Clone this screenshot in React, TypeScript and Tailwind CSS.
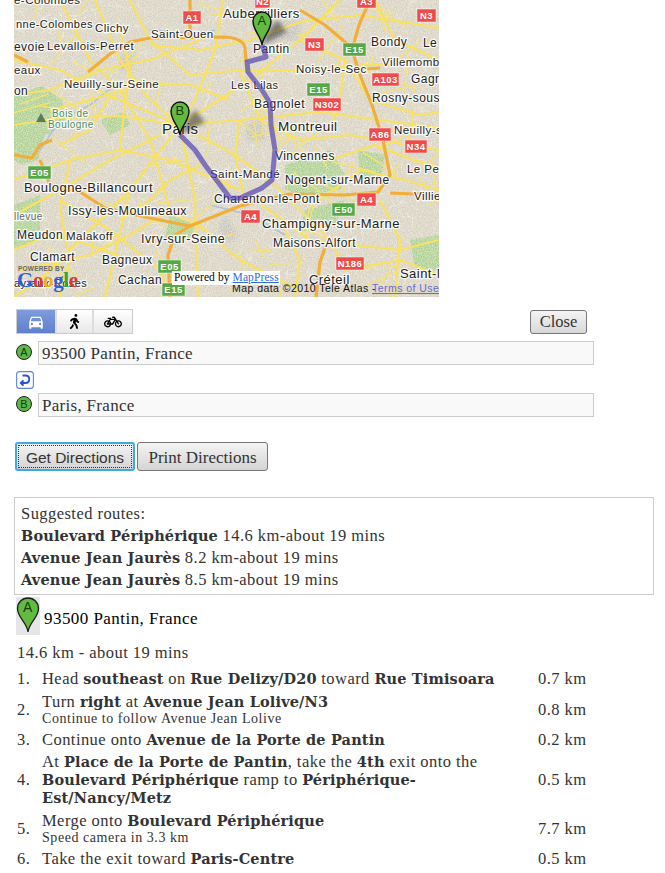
import { FaBicycle, FaWalking } from "react-icons/fa";
import { MdDirectionsCar } from "react-icons/md";

const serif = "font-['Liberation_Serif',serif]";

// map labels: [text, x, baseline, size]
const labels: [string, number, number, number][] = [
  ["e-Colombes", 14, 4, 11.5],
  ["Aubervilliers", 223, 18, 13],
  ["nne-Colombes", 16, 28, 11],
  ["Clichy", 95, 32, 11.5],
  ["Saint-Ouen", 151, 38, 11.5],
  ["Levallois-Perret", 47, 50, 11.5],
  ["evoie", 14, 51, 12],
  ["Pantin", 253, 53, 12],
  ["Noisy-le-Sec", 296, 73, 11.5],
  ["Bondy", 371, 46, 12],
  ["Le", 423, 47, 12],
  ["Villemomble", 382, 66, 11.5],
  ["Les Lilas", 231, 89, 11],
  ["Gagn", 411, 83, 12],
  ["Neuilly-sur-Seine", 64, 88, 11.5],
  ["eaux", 14, 74, 11.5],
  ["on", 14, 95, 12],
  ["Rosny-sous-", 372, 102, 12],
  ["Bagnolet", 254, 108, 12],
  ["Montreuil", 278, 131, 13.5],
  ["Paris", 162, 134, 15],
  ["Neuilly-s", 394, 134, 11.5],
  ["Vincennes", 275, 160, 12],
  ["Le Per", 407, 173, 11.5],
  ["Saint-Mandé", 210, 178, 11.5],
  ["Nogent-sur-Marne", 285, 184, 12],
  ["Boulogne-Billancourt", 24, 192, 13],
  ["Villier", 414, 200, 11.5],
  ["Charenton-le-Pont", 214, 203, 12],
  ["Issy-les-Moulineaux", 68, 215, 12.5],
  ["Champigny-sur-Marne", 262, 228, 13],
  ["Meudon", 17, 239, 12],
  ["Malakoff", 66, 240, 11.5],
  ["Ivry-sur-Seine", 141, 243, 12.5],
  ["Maisons-Alfort", 273, 247, 12],
  ["Clamart", 30, 261, 12],
  ["Bagneux", 102, 264, 12],
  ["Saint-M", 400, 278, 13],
  ["Cachan", 118, 284, 12],
  ["Créteil", 309, 284, 13],
  ["ay-aux-Roses", 14, 287, 11],
];

// road shields: [text, x, y, width, colour]
const shields: [string, number, number, number, string][] = [
  ["N2", 255, -5, 15, "#ef4b4b"],
  ["A3", 357, -5, 19, "#ef4b4b"],
  ["A1", 183, 11, 18, "#ef4b4b"],
  ["N3", 417, 9, 19, "#ef4b4b"],
  ["N3", 305, 38, 19, "#ef4b4b"],
  ["A103", 372, 73, 27, "#ef4b4b"],
  ["N302", 313, 98, 28, "#ef4b4b"],
  ["A86", 369, 128, 22, "#ef4b4b"],
  ["N34", 405, 140, 22, "#ef4b4b"],
  ["A4", 357, 193, 19, "#ef4b4b"],
  ["A4", 241, 210, 19, "#ef4b4b"],
  ["N186", 336, 257, 28, "#ef4b4b"],
  ["E15", 343, 43, 23, "#55a845"],
  ["E15", 307, 83, 23, "#55a845"],
  ["E05", 28, 166, 23, "#55a845"],
  ["E50", 332, 203, 23, "#55a845"],
  ["E05", 158, 260, 23, "#55a845"],
  ["E15", 162, 283, 23, "#55a845"],
];

const yellowRoads = [
  "M14 125 L60 118 L120 116 L180 125 L240 120 L320 112 L439 128",
  "M14 60 L60 70 L110 96 L180 125 L235 155 L275 185 L330 240",
  "M95 0 L120 60 L150 100 L180 125 L195 200 L198 297",
  "M223 0 L215 50 L195 100 L180 125 L130 190 L105 297",
  "M14 215 L60 190 L110 160 L180 125 L250 80 L300 40 L340 0",
  "M60 0 L90 60 L120 90 L150 140 L170 210",
  "M14 180 L70 160 L120 150 L170 160 L240 190",
  "M130 0 L150 40 L190 75 L240 70 L300 70 L439 60",
  "M150 45 L200 50 L250 40 L300 22 L360 15 L439 28",
  "M14 95 L50 90 L100 70 L150 60 L200 40",
  "M240 70 L260 120 L300 140 L350 135 L439 150",
  "M275 150 L330 160 L375 145 L439 170",
  "M130 190 L80 240 L40 280 L14 297",
  "M70 160 L60 210 L70 260 L60 297",
  "M170 210 L130 235 L90 255 L20 270",
  "M198 225 L240 260 L300 290",
  "M262 205 L310 240 L400 250 L439 240",
  "M330 240 L345 270 L400 260 L439 275",
  "M320 200 L360 170 L405 180 L439 190",
  "M345 60 L370 100 L420 115 L439 112",
  "M300 40 L345 60 L340 100 L330 130",
  "M230 100 L190 85 L140 85 L90 100 L50 110",
  "M110 96 L90 130 L60 145",
  "M200 165 L170 180 L150 200 L120 220",
  "M60 200 L110 230 L160 270 L170 297",
  "M240 120 L235 155 L245 200",
  "M375 0 L395 40 L439 60",
  "M380 200 L400 240 L395 297",
  "M295 297 L300 260 L285 230",
  "M120 30 L130 70 L125 100 L120 150",
  "M14 250 L50 235 L90 245 L130 260",
];

const orangeRoads = [
  "M28 62 L14 55",
  "M88 72 L110 54 L130 42 L150 38 L225 37 Q243 38 245 48 L246 62",
  "M190 0 L190 37",
  "M14 155 L32 158 L40 145 L52 140",
  "M40 160 L50 185 L80 192 L105 208 L150 218 L190 226 L240 206 L290 194 L345 195 L378 192 L390 175 L383 140 L372 105 L360 75 L352 50 L359 25 L370 0",
  "M300 10 L325 25 L352 48",
  "M390 193 L439 195",
  "M352 70 L380 68",
  "M170 297 L168 255 L175 235 L190 226",
  "M316 297 L320 262 L326 245",
];

const greenAreas = [
  "M14 96 L42 86 L62 100 L66 125 L45 135 L38 160 L22 165 L14 160 Z",
  "M285 165 L330 150 L345 175 L340 190 L305 195 L285 190 Z",
  "M305 210 L345 200 L335 225 L300 232 Z",
  "M14 205 L40 195 L40 240 L14 248 Z",
  "M100 120 L125 112 L130 125 L110 135 Z",
  "M170 215 L195 225 L190 240 L165 238 Z",
  "M358 150 L385 155 L380 185 L360 180 Z",
  "M410 240 L439 235 L439 270 L415 268 Z",
];

const grayAreas = [
  "M260 22 L300 20 L300 40 L262 45 Z",
  "M245 125 L262 118 L266 140 L248 142 Z",
  "M120 55 L135 52 L130 70 L118 72 Z",
  "M225 215 L238 235 L228 245 L218 228 Z",
];

const route =
  "M262 45 L266 57 L247 62 L248 72 L262 90 L270 103 L271 125 L275 150 L272 180 L262 188 L240 198 L230 198 L205 165 L195 150 L180 135";

// fine grain of the city: short pale streets, and short yellow links between the main roads
function makeStreets(count: number, min: number, spread: number, seedStart: number) {
  let seed = seedStart;
  const rnd = () => {
    seed = (seed * 16807) % 2147483647;
    return seed / 2147483647;
  };
  const out: string[] = [];
  for (let i = 0; i < count; i++) {
    const x = 14 + rnd() * 425;
    const y = rnd() * 297;
    const a = rnd() * Math.PI * 2;
    const l = min + rnd() * spread;
    out.push(`M${x.toFixed(1)} ${y.toFixed(1)}l${(Math.cos(a) * l).toFixed(1)} ${(Math.sin(a) * l).toFixed(1)}`);
  }
  return out.join("");
}
const paleStreets = makeStreets(1100, 3, 8, 7);
const yellowLinks = makeStreets(110, 14, 34, 31);

function Pin({ x, y, letter }: { x: number; y: number; letter: string }) {
  return (
    <g>
      <path d={`M${x} ${y} L${x + 25} ${y - 13} L${x + 15} ${y - 25} L${x + 5} ${y - 12} Z`} fill="#222" opacity="0.5" filter="url(#soft)" />
      <path
        d={`M${x} ${y} C${x - 1} ${y - 9} ${x - 9} ${y - 14} ${x - 9} ${y - 24} A9 9 0 1 1 ${x + 9} ${y - 24} C${x + 9} ${y - 14} ${x + 1} ${y - 9} ${x} ${y} Z`}
        fill="#62bb40"
        stroke="#111"
        strokeWidth="1.4"
      />
      <text x={x} y={y - 20} textAnchor="middle" fontSize="13" fontFamily="Liberation Sans" fill="#163d0c">
        {letter}
      </text>
    </g>
  );
}

function MapPicture() {
  return (
    <svg viewBox="14 0 425 297" className="block h-[297px] w-[425px]">
      <defs>
        <filter id="grain" x="0" y="0" width="100%" height="100%">
          <feTurbulence type="fractalNoise" baseFrequency="0.8" numOctaves="2" seed="4" />
          <feColorMatrix values="0 0 0 0 0.96  0 0 0 0 0.94  0 0 0 0 0.88  1.1 0 0 0 -0.3" />
        </filter>
        <filter id="soft">
          <feGaussianBlur stdDeviation="2.2" />
        </filter>
        <filter id="jpeg">
          <feGaussianBlur stdDeviation="0.35" />
        </filter>
      </defs>
      <g filter="url(#jpeg)">
        <rect x="14" y="0" width="425" height="297" fill="#d6d0bf" />
        <path d={paleStreets} stroke="#f3efe3" strokeWidth="0.7" fill="none" opacity="0.8" />
        {greenAreas.map((d) => (
          <path key={d} d={d} fill="#a9cd8c" />
        ))}
        {grayAreas.map((d) => (
          <path key={d} d={d} fill="#c4c1b9" filter="url(#soft)" />
        ))}
        <rect x="14" y="0" width="425" height="297" filter="url(#grain)" />
        <path d="M150 30 Q205 35 215 30 M40 150 L60 120 L90 105 L115 85 L100 70 M210 205 L250 215 L285 235" stroke="#a9c4dc" strokeWidth="1.5" fill="none" />
        <path d={yellowLinks} stroke="#f7e36e" strokeWidth="1.3" fill="none" />
        {yellowRoads.map((d) => (
          <path key={d} d={d} stroke="#f8e25f" strokeWidth="2.2" fill="none" strokeLinejoin="round" />
        ))}
        {orangeRoads.map((d) => (
          <path key={d} d={d} stroke="#f1ae37" strokeWidth="3.2" fill="none" strokeLinejoin="round" />
        ))}
      </g>
      {shields.map(([t, x, y, w, c]) => (
        <g key={t + x}>
          <rect x={x} y={y} width={w} height="13" fill={c} stroke="#fff" strokeOpacity="0.6" strokeWidth="0.8" />
          <text x={x + w / 2} y={y + 10} textAnchor="middle" fontSize="9.5" fontWeight="700" fontFamily="Liberation Sans" fill="#fff">
            {t}
          </text>
        </g>
      ))}
      <g fontFamily="Liberation Sans" fill="#222" stroke="#fff" strokeWidth="2.4" strokeOpacity="0.85" style={{ paintOrder: "stroke" }}>
        {labels.map(([t, x, y, s]) => (
          <text key={t} x={x} y={y} fontSize={s}>
            {t}
          </text>
        ))}
        <text x="52" y="117" fontSize="10" fill="#4f8a5a">Bois de</text>
        <text x="48" y="128" fontSize="10" fill="#4f8a5a">Boulogne</text>
        <text x="14" y="220" fontSize="10" fill="#666">llevue</text>
      </g>
      {/* the route runs over the labels, as in the real map */}
      <path d={route} stroke="#4f3fb4" strokeWidth="5" strokeOpacity="0.68" fill="none" strokeLinejoin="round" />
      <path d="M41 113 L36 122 H46 Z" fill="#5d7c55" />
      <Pin x={262} y={45} letter="A" />
      <Pin x={180} y={135} letter="B" />
      <text x="18" y="271" fontSize="6.5" fontWeight="700" fontFamily="Liberation Sans" fill="#666" letterSpacing="0.2">
        POWERED BY
      </text>
      <text x="17" y="287" fontSize="21" fontWeight="700" fontFamily="Liberation Serif" letterSpacing="-0.4">
        <tspan fill="#2f62d8">G</tspan>
        <tspan fill="#d8392b">o</tspan>
        <tspan fill="#eeb211">o</tspan>
        <tspan fill="#2f62d8">g</tspan>
        <tspan fill="#3ba234">l</tspan>
        <tspan fill="#d8392b">e</tspan>
      </text>
      <text x="232" y="292" fontSize="10.5" fontFamily="Liberation Sans" fill="#111">
        Map data ©2010 Tele Atlas -
      </text>
      <text x="372" y="292" fontSize="10.5" fontFamily="Liberation Sans" fill="#6a6ad0" textDecoration="underline">
        Terms of Use
      </text>
    </svg>
  );
}

function Dot({ letter }: { letter: string }) {
  return (
    <span className="flex h-4 w-4 shrink-0 items-center justify-center rounded-full border border-[#222] bg-[#5cb848] font-['Liberation_Sans',sans-serif] text-[11px] leading-none tracking-normal text-[#143d0a]">
      {letter}
    </span>
  );
}

function PlaceInput({ value }: { value: string }) {
  return (
    <input
      readOnly
      value={value}
      className={`h-6 w-[556px] border border-[#ccc] bg-[#f9f9f9] px-[3px] pt-[1px] text-[17px] tracking-[0.3px] text-[#333] outline-none ${serif}`}
    />
  );
}

// Georgia's bold is far wider than Liberation Serif's; DejaVu Serif Bold is the nearest in colour and width
function B({ children }: { children: React.ReactNode }) {
  return <b className="font-['DejaVu_Serif',serif] text-[14.5px] font-bold tracking-[0.15px]">{children}</b>;
}

const rows = [
  { h: 22, d: "0.7 km", n: <>Head <B>southeast</B> on <B>Rue Delizy/D20</B> toward <B>Rue Timisoara</B></> },
  { h: 39, d: "0.8 km", n: <>Turn <B>right</B> at <B>Avenue Jean Lolive/N3</B></>, s: "Continue to follow Avenue Jean Lolive" },
  { h: 22, d: "0.2 km", n: <>Continue onto <B>Avenue de la Porte de Pantin</B></> },
  { h: 58, d: "0.5 km", n: <>At <B>Place de la Porte de Pantin</B>, take the <B>4th</B> exit onto the <B>Boulevard Périphérique</B> ramp to <B>Périphérique-Est/Nancy/Metz</B></> },
  { h: 39, d: "7.7 km", n: <>Merge onto <B>Boulevard Périphérique</B></>, s: "Speed camera in 3.3 km" },
  { h: 22, d: "0.5 km", n: <>Take the exit toward <B>Paris-Centre</B></> },
];

export default function App() {
  return (
    <main className={`h-[873px] overflow-hidden bg-white pl-[14px] text-[16.5px] leading-[22px] tracking-[0.45px] text-[#333] ${serif}`}>
      <div className="relative w-[425px]">
        <MapPicture />
        <div className="absolute left-[158px] top-[271px] h-[14px] w-[108px] bg-white pl-[2px] text-[11.5px] leading-[13px] tracking-[0.1px] whitespace-nowrap text-black">
          Powered by <span className="text-[#2a6fd6] underline">MapPress</span>
        </div>
      </div>

      <div className="mt-3 flex w-[573px] items-center justify-between pl-[2px]">
        <div className="flex h-[25px] w-[117px] border border-[#ccc]">
          <span className="flex w-[38px] items-center justify-center bg-gradient-to-b from-[#7e9bdc] to-[#5f80cd] text-white">
            <MdDirectionsCar size={18} />
          </span>
          <span className="flex w-[39px] items-center justify-center border-x-2 border-[#ddd] bg-gradient-to-b from-white to-[#e8e8e8] text-black">
            <FaWalking size={15} />
          </span>
          <span className="flex flex-1 items-center justify-center bg-gradient-to-b from-white to-[#e8e8e8] text-black">
            <FaBicycle size={18} />
          </span>
        </div>
        <button className="h-[24px] w-[57px] rounded-[3px] border border-[#777] bg-gradient-to-b from-[#f4f4f4] to-[#d8d8d8] text-[16.5px] tracking-normal text-[#333]">
          Close
        </button>
      </div>

      <div className="mt-[7px] flex items-start gap-[6px] pl-[2px]">
        <span className="mt-[3px]"><Dot letter="A" /></span>
        <PlaceInput value="93500 Pantin, France" />
      </div>
      <div className="mt-[6px] h-[22px] pl-[2px]">
        <svg viewBox="0 0 18 18" className="h-[18px] w-[18px]">
          <rect x="0.6" y="0.6" width="16.8" height="16.8" rx="3" fill="#fff" stroke="#5a86e4" strokeWidth="1.1" />
          <path d="M6.5 4.5 H9.5 C14.5 4.5 14.5 12 9.5 12 H5 M7.5 9.4 L4.8 12 L7.5 14.6" fill="none" stroke="#2a56cc" strokeWidth="1.9" />
        </svg>
      </div>
      <div className="flex items-start gap-[6px] pl-[2px]">
        <span className="mt-[3px]"><Dot letter="B" /></span>
        <PlaceInput value="Paris, France" />
      </div>

      <div className="mt-[25px] flex gap-[2px] pl-[1px] text-[17px] tracking-normal">
        <button className="h-[29px] w-[120px] rounded-[3px] border-2 border-[#3fa9e0] bg-gradient-to-b from-[#f4f4f4] to-[#d4d4d4] pt-[2px] font-['Liberation_Sans',sans-serif] text-[15.5px] text-[#333] outline-1 -outline-offset-4 outline-dotted outline-[#333]">
          Get Directions
        </button>
        <button className="h-[29px] w-[131px] rounded-[3px] border border-[#777] bg-gradient-to-b from-[#f4f4f4] to-[#d4d4d4] pt-[2px] text-[#333]">
          Print Directions
        </button>
      </div>

      <section className="mt-[26px] h-[98px] w-[640px] border border-[#ccc] py-[5px] pl-[6px]">
        <div>Suggested routes:</div>
        <div><B>Boulevard Périphérique</B> 14.6 km-about 19 mins</div>
        <div><B>Avenue Jean Jaurès</B> 8.2 km-about 19 mins</div>
        <div><B>Avenue Jean Jaurès</B> 8.5 km-about 19 mins</div>
      </section>

      <div className="mt-[2px] flex items-center gap-[4px] pl-[2px] text-[17px] text-black">
        <span className="h-[38px] w-[24px] bg-[#e6e6e6]">
          <svg viewBox="0 0 24 38" className="h-[38px] w-[24px]">
            <path d="M12 35 C11 25 1.5 21 1.5 11.5 A10.5 10.5 0 1 1 22.5 11.5 C22.5 21 13 25 12 35 Z" fill="#62bb40" stroke="#1d1d1d" strokeWidth="1.3" />
            <text x="12" y="15" textAnchor="middle" fontSize="14" fontFamily="Liberation Sans" fill="#163d0c">A</text>
          </svg>
        </span>
        <span className="mt-[5px]">93500 Pantin, France</span>
      </div>
      <p className="mt-[7px] pl-[3px]">14.6 km - about 19 mins</p>

      <table className="mt-[4px] w-[600px] table-fixed border-collapse">
        <tbody>
          {rows.map((r, i) => (
            <tr key={r.d + i} style={{ height: r.h }}>
              <td className="w-[28px] p-0 pl-[3px]">{i + 1}.</td>
              <td className="w-[496px] p-0 pr-[26px] leading-[18px]">
                <div>{r.n}</div>
                {r.s && <div className="text-[14px] leading-[16px] tracking-[0.55px]">{r.s}</div>}
              </td>
              <td className="p-0">{r.d}</td>
            </tr>
          ))}
        </tbody>
      </table>
    </main>
  );
}
